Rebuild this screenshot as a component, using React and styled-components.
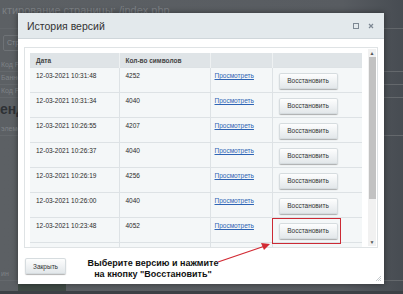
import React from 'react';
import styled, { createGlobalStyle } from 'styled-components';

const GlobalStyle = createGlobalStyle`
  html, body {
    margin: 0;
    padding: 0;
  }
  body {
    background: #55595e;
    font-family: 'Liberation Sans', Arial, sans-serif;
  }
`;

const versions = [
  { date: '12-03-2021 10:31:48', chars: '4252' },
  { date: '12-03-2021 10:31:34', chars: '4040' },
  { date: '12-03-2021 10:26:55', chars: '4207' },
  { date: '12-03-2021 10:26:37', chars: '4040' },
  { date: '12-03-2021 10:26:19', chars: '4256' },
  { date: '12-03-2021 10:26:00', chars: '4040' },
  { date: '12-03-2021 10:23:48', chars: '4052' },
  { date: '12-03-2021 10:20:11', chars: '4040' },
];

// Screen with the dimmed editor page behind the popup
const Screen = styled.div`
  position: relative;
  width: 403px;
  height: 294px;
  overflow: hidden;
  background: linear-gradient(to right, #5c6064 0%, #585c61 85%, #474c52 100%);
`;

const Behind = styled.div`
  display: flex;
  flex-direction: column;
  height: 100%;
  color: #7b7f83;
`;

const PageTitle = styled.div`
  font-size: 11px;
  padding: 4px 0 0 2px;
  white-space: nowrap;
  height: 24px;
  border-bottom: 1px solid #62666a;
`;

const Toolbar = styled.div`
  display: flex;
  padding: 6px 0 0 3px;
  height: 24px;
`;

const FakeButton = styled.div`
  width: 30px;
  height: 14px;
  border: 1px solid #6e7276;
  border-radius: 2px;
  font-size: 7px;
  line-height: 14px;
  padding-left: 3px;
  color: #85898d;
`;

const BehindRow = styled.div`
  font-size: 7px;
  height: 12px;
  line-height: 12px;
  padding-left: 1px;
  border-bottom: 1px solid #64686c;
  color: #7e8286;
`;

const BigWord = styled.div`
  font-size: 14px;
  font-weight: bold;
  color: #2e3135;
  padding: 3px 0 0 0;
  height: 22px;
`;

const Spacer = styled.div`
  flex: 1;
`;

const BottomBar = styled.div`
  display: flex;
  align-items: flex-end;
  height: 10px;
  border-bottom: 3px solid #3c4045;
`;

const BottomBlock = styled.div`
  margin-left: 18px;
  width: 48px;
  height: 10px;
  background: #3f4a45;
`;

// Dialog over the page
const Dialog = styled.div`
  position: absolute;
  left: 18px;
  top: 13px;
  width: 366px;
  height: 271px;
  background: #fff;
  box-shadow: 0 0 6px rgba(0, 0, 0, 0.45);
  display: flex;
  flex-direction: column;
`;

const Header = styled.div`
  height: 25px;
  background: #e3e9ec;
  border-bottom: 1px solid #cfd6da;
  display: flex;
  align-items: center;
  padding: 0 10px 0 9px;
`;

const Title = styled.div`
  flex: 1;
  font-size: 10.5px;
  color: #333;
`;

const HeaderIcons = styled.div`
  display: flex;
  align-items: center;
  gap: 9px;
`;

const Body = styled.div`
  padding: 8px 6px 0 6px;
`;

const Frame = styled.div`
  height: 199px;
  border: 1px solid #dfe3e5;
  display: flex;
`;

const TableWrap = styled.div`
  flex: 1;
  overflow: hidden;
  padding: 5px 0 0 5px;
`;

const Table = styled.table`
  width: 333px;
  border-collapse: collapse;
  table-layout: fixed;
  background: #f4f7f8;
  font-size: 6.5px;
  color: #2a2a2a;
`;

const Th = styled.th`
  background: #dfe4e7;
  height: 14px;
  padding: 0 0 0 6px;
  text-align: left;
  font-size: 6.5px;
  font-weight: bold;
  color: #444;
  border-left: 1px solid #eef1f2;
  &:first-child {
    border-left: none;
  }
`;

const Tr = styled.tr`
  height: 25px;
`;

const Td = styled.td`
  padding: 4px 0 0 ${(p) => p.pad || 6}px;
  vertical-align: top;
  border-top: 1px solid #dde2e5;
  border-left: 1px solid #dde2e5;
  line-height: 8px;
  &:first-child {
    border-left: none;
  }
`;

const ViewLink = styled.a`
  color: #2e64b4;
  text-decoration: underline;
  font-size: 6.5px;
`;

const Button = styled.div`
  display: flex;
  align-items: center;
  justify-content: center;
  width: ${(p) => p.width}px;
  height: 16px;
  box-sizing: border-box;
  border-radius: 2px;
  background: linear-gradient(#ffffff, #e1e6e9);
  box-shadow: 0 1px 1px rgba(0, 0, 0, 0.3), inset 0 0 0 1px #d6dcdf;
  font-size: ${(p) => p.size}px;
  color: #333;
  flex-shrink: 0;
`;

const RowButton = styled(Button)`
  margin-top: 1px;
`;

const Scrollbar = styled.div`
  width: 8px;
  margin: 1px 1px 1px 6px;
  background: #f1f1f1;
  display: flex;
  flex-direction: column;
  align-items: center;
`;

const Arrow = styled.div`
  height: 8px;
  font-size: 5px;
  line-height: 8px;
  color: #555;
`;

const Thumb = styled.div`
  width: 7px;
  height: 142px;
  background: #c2c2c2;
`;

const Footer = styled.div`
  flex: 1;
  display: flex;
  align-items: flex-start;
  padding: 10px 0 0 7px;
`;

const Note = styled.div`
  margin: 0 0 0 20px;
  width: 134px;
  text-align: center;
  font-size: 9px;
  line-height: 11px;
  font-weight: bold;
  color: #111;
`;

const Highlight = styled.div`
  position: absolute;
  left: 254px;
  top: 205px;
  width: 67px;
  height: 24px;
  border: 1px solid #cc2a35;
`;

const Pointer = styled.svg`
  position: absolute;
  left: 195px;
  top: 225px;
`;

const Grip = styled.svg`
  position: absolute;
  right: 3px;
  bottom: 3px;
`;

function App() {
  return (
    <>
      <GlobalStyle />
      <Screen>
        <Behind>
          <PageTitle>ктирование страницы: /index.php</PageTitle>
          <Toolbar>
            <FakeButton>Стр</FakeButton>
          </Toolbar>
          <BehindRow>Код PHP</BehindRow>
          <BehindRow>Баннер</BehindRow>
          <BehindRow>Код РНР</BehindRow>
          <BigWord>ендарь</BigWord>
          <BehindRow>элемент</BehindRow>
          <Spacer />
          <BehindRow>ин</BehindRow>
          <BottomBar>
            <BottomBlock />
          </BottomBar>
        </Behind>

        <Dialog>
          <Header>
            <Title>История версий</Title>
            <HeaderIcons>
              <svg width="6" height="6" viewBox="0 0 6 6">
                <rect x="0.5" y="0.5" width="5" height="5" fill="none" stroke="#7d8893" strokeWidth="1" />
              </svg>
              <svg width="6" height="6" viewBox="0 0 6 6">
                <path d="M1 1 L5 5 M5 1 L1 5" stroke="#7d8893" strokeWidth="1.2" />
              </svg>
            </HeaderIcons>
          </Header>

          <Body>
            <Frame>
              <TableWrap>
                <Table>
                  <colgroup>
                    <col style={{ width: 89 }} />
                    <col style={{ width: 91 }} />
                    <col style={{ width: 62 }} />
                    <col style={{ width: 91 }} />
                  </colgroup>
                  <thead>
                    <tr>
                      <Th>Дата</Th>
                      <Th>Кол-во символов</Th>
                      <Th />
                      <Th />
                    </tr>
                  </thead>
                  <tbody>
                    {versions.map((v, i) => (
                      <Tr key={i}>
                        <Td>{v.date}</Td>
                        <Td>{v.chars}</Td>
                        <Td pad={4}>
                          <ViewLink>Просмотреть</ViewLink>
                        </Td>
                        <Td>
                          <RowButton width={59} size={6.5}>Восстановить</RowButton>
                        </Td>
                      </Tr>
                    ))}
                  </tbody>
                </Table>
              </TableWrap>
              <Scrollbar>
                <Arrow>▲</Arrow>
                <Thumb />
                <Spacer />
                <Arrow>▼</Arrow>
              </Scrollbar>
            </Frame>
          </Body>

          <Footer>
            <Button width={41} size={6.5}>Закрыть</Button>
            <Note>
              Выберите версию и нажмите
              <br />
              на кнопку "Восстановить"
            </Note>
          </Footer>

          <Highlight />
          <Pointer width="60" height="30" viewBox="0 0 60 30">
            <line x1="5" y1="24" x2="52" y2="8" stroke="#d22b34" strokeWidth="1.2" />
            <polygon points="57,6 48,5 51,12" fill="#d22b34" />
          </Pointer>
          <Grip width="6" height="6" viewBox="0 0 6 6">
            <path d="M6 1 L1 6 M6 3 L3 6 M6 5 L5 6" stroke="#b9bfc3" strokeWidth="0.8" />
          </Grip>
        </Dialog>
      </Screen>
    </>
  );
}

export default App;
